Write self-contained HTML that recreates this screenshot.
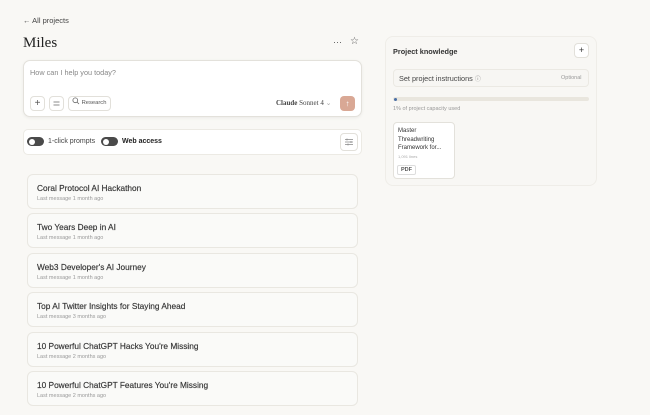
<!DOCTYPE html>
<html><head><meta charset="utf-8"><style>
*{box-sizing:border-box;margin:0;padding:0}
body{width:650px;height:415px;overflow:hidden;background:#f9f8f5;font-family:"Liberation Sans",sans-serif;color:#2b2a27;position:relative}
.a{position:absolute}
.card{position:absolute;left:27px;width:331px;height:35px;background:#fafaf8;border:1px solid #e9e7e1;border-radius:6px}
.card .t{position:absolute;left:9px;top:8px;font-size:8.3px;color:#333;-webkit-text-stroke:0.15px #333}
.card .s{position:absolute;left:9px;top:21px;font-size:5.5px;color:#999}
.btn{position:absolute;width:15px;height:15px;border:1px solid #e2e0da;border-radius:4px;background:#fff}
.tog{position:absolute;width:17px;height:9px;border-radius:5px;background:#4a4a4a}
.tog::after{content:"";position:absolute;left:1.5px;top:1.5px;width:6px;height:6px;border-radius:50%;background:#fff}
</style></head><body>
<div class="a" style="left:23px;top:15.5px;font-size:7.5px;color:#444">← All projects</div>
<div class="a" style="left:23px;top:35px;font-size:15px;font-family:'Liberation Serif',serif;color:#222">Miles</div>
<div class="a" style="left:333px;top:37px;font-size:9px;color:#555">···</div>
<div class="a" style="left:350px;top:36px;font-size:10px;color:#555">☆</div>

<div class="a" style="left:23px;top:60px;width:339px;height:57px;background:#fff;border:1px solid #e3e1db;border-radius:7px;box-shadow:0 1px 3px rgba(0,0,0,.06)"></div>
<div class="a" style="left:30px;top:68px;font-size:7.3px;color:#888">How can I help you today?</div>
<div class="btn" style="left:30px;top:96px;text-align:center;font-size:10px;line-height:13px;color:#555">+</div>
<div class="btn" style="left:49px;top:96px;"><svg width="13" height="13" viewBox="0 0 13 13"><path d="M3.5 5h6M3.5 8h6" stroke="#666" stroke-width="0.8"/></svg></div>
<div class="btn" style="left:68px;top:96px;width:43px;font-size:5.8px;line-height:13px;color:#555;padding-left:3px"><svg width="8" height="8" viewBox="0 0 8 8" style="vertical-align:-1px"><circle cx="3.3" cy="3.3" r="2.4" stroke="#666" stroke-width="0.8" fill="none"/><path d="M5 5l2 2" stroke="#666" stroke-width="0.8"/></svg> Research</div>
<div class="a" style="left:276px;top:99px;font-size:7px;font-family:'Liberation Serif',serif;color:#444"><b>Claude</b> Sonnet 4 <span style="color:#aaa">⌄</span></div>
<div class="a" style="left:340px;top:96px;width:15px;height:15px;border-radius:4px;background:#d9a895;color:#fff;font-size:8px;text-align:center;line-height:15px">↑</div>

<div class="a" style="left:23px;top:129px;width:339px;height:26px;background:#fff;border:1px solid #eceae4;border-radius:5px"></div>
<div class="tog" style="left:27px;top:137px"></div>
<div class="a" style="left:48px;top:138px;font-size:7px;color:#444">1-click prompts</div>
<div class="tog" style="left:101px;top:137px"></div>
<div class="a" style="left:122px;top:137.5px;font-size:7px;font-weight:bold;color:#222">Web access</div>
<div class="btn" style="left:340px;top:133px;width:18px;height:18px"><svg width="16" height="16" viewBox="0 0 16 16"><path d="M4 5.5h8M4 8h8M4 10.5h8M6 4.5v2M10 7v2M7 9.5v2" stroke="#888" stroke-width="0.7"/></svg></div>

<div class="card" style="top:174px"><div class="t">Coral Protocol AI Hackathon</div><div class="s">Last message 1 month ago</div></div>
<div class="card" style="top:213px"><div class="t">Two Years Deep in AI</div><div class="s">Last message 1 month ago</div></div>
<div class="card" style="top:253px"><div class="t">Web3 Developer's AI Journey</div><div class="s">Last message 1 month ago</div></div>
<div class="card" style="top:292px"><div class="t">Top AI Twitter Insights for Staying Ahead</div><div class="s">Last message 3 months ago</div></div>
<div class="card" style="top:332px"><div class="t">10 Powerful ChatGPT Hacks You're Missing</div><div class="s">Last message 2 months ago</div></div>
<div class="card" style="top:371px"><div class="t">10 Powerful ChatGPT Features You're Missing</div><div class="s">Last message 2 months ago</div></div>

<div class="a" style="left:385px;top:36px;width:212px;height:150px;border:1px solid #efede8;border-radius:8px;background:#f8f7f4"></div>
<div class="a" style="left:393px;top:47px;font-size:7.3px;font-weight:bold;color:#333">Project knowledge</div>
<div class="btn" style="left:574px;top:43px;text-align:center;font-size:9px;line-height:13px;color:#333">+</div>
<div class="a" style="left:393px;top:69px;width:196px;height:18px;border:1px solid #ebe9e3;border-radius:4px;background:#f7f6f3"></div>
<div class="a" style="left:399px;top:74px;font-size:7.3px;color:#444">Set project instructions <span style="color:#888;font-size:6px">ⓘ</span></div>
<div class="a" style="left:561px;top:75px;font-size:5.5px;color:#999">Optional</div>
<div class="a" style="left:393px;top:97px;width:196px;height:4px;border-radius:2px;background:#e9e6de"></div>
<div class="a" style="left:394px;top:97.5px;width:3px;height:3px;border-radius:50%;background:#4a6fa5"></div>
<div class="a" style="left:393px;top:106px;font-size:5.5px;color:#999">1% of project capacity used</div>
<div class="a" style="left:393px;top:122px;width:62px;height:57px;background:#fff;border:1px solid #e3e1db;border-radius:4px"></div>
<div class="a" style="left:398px;top:127px;font-size:6px;line-height:8.5px;color:#333">Master<br>Threadwriting<br>Framework for...</div>
<div class="a" style="left:398px;top:154px;font-size:4px;color:#aaa">1,091 lines</div>
<div class="a" style="left:397px;top:165px;padding:1px 3px;font-size:5.5px;font-weight:bold;color:#555;border:1px solid #ddd;border-radius:2px">PDF</div>
</body></html>
